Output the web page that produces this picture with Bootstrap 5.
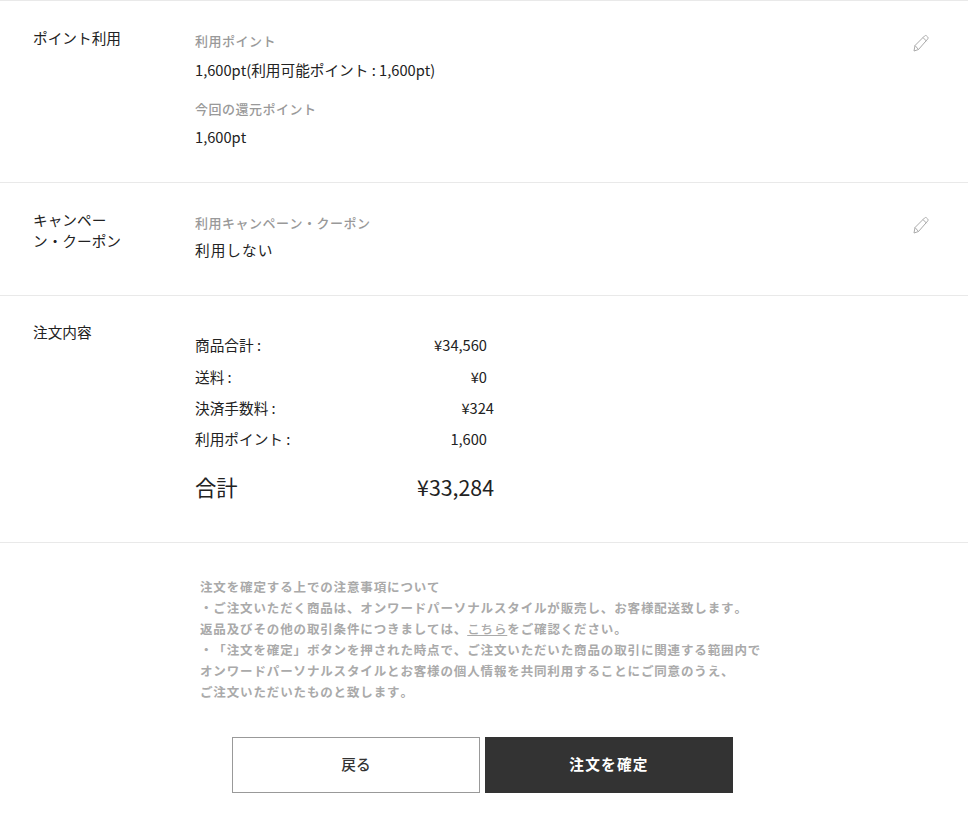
<!DOCTYPE html>
<html lang="ja">
<head>
    <meta charset="UTF-8">
    <title>注文内容の確認</title>
    <link rel="stylesheet" href="https://cdn.jsdelivr.net/npm/bootstrap@5.3.0/dist/css/bootstrap.min.css">
    <style>
        body {
            font-family: "Noto Sans CJK JP", "Noto Sans", sans-serif;
            font-size: 14.67px;
            color: #222;
            background: #fff;
            font-kerning: none;
            text-spacing-trim: space-all;
        }
        .sec-row { border-top: 1px solid #e9e9e9; padding-left: 33px; padding-right: 38px; }
        .sec-point { height: 182px; padding-top: 26px; }
        .sec-coupon { height: 113px; padding-top: 26px; }
        .sec-order { height: 247px; padding-top: 25px; }
        .sec-title { width: 88px; margin-right: 74px; line-height: 21px; flex: none; }
        .sec-body { flex: 1 1 auto; }
        .item-label { font-size: 13px; font-weight: 500; color: #999; letter-spacing: .5px; line-height: 18px; margin-top: 5px; }
        .item-value { line-height: 20px; margin-top: 10px; }
        .item-label.next + .item-value { margin-top: 9px; }
        .item-value.plain { letter-spacing: 1px; margin-top: 8px; }
        .item-label.next { margin-top: 20px; }
        .edit-pen { width: 18px; height: 18px; margin-top: 7px; flex: none; }
        .price-list { width: 300px; padding-top: 8.4px; }
        .price-line { height: 31.33px; line-height: 31.33px; }
        .price-amt { width: 292px; text-align: right; }
        .price-amt.wide { width: 299px; }
        .price-line > span:first-child { position: absolute; }
        .price-total { font-size: 21.33px; line-height: 30px; margin-top: 17px; display: flex; justify-content: space-between; width: 299px; }
        .notice-text { margin: 33px 0 0 200px; font-size: 12.5px; font-weight: 700; color: #aaa; letter-spacing: .86px; line-height: 21px; white-space: nowrap; }
        .notice-text a { color: #aaa; font-weight: 500; }
        .btn-row { margin: 35px 0 0 232px; gap: 5px; }
        .act-btn { width: 248px; height: 56px; border-radius: 0; font-size: 14.67px; display: flex; align-items: center; justify-content: center; padding-bottom: 8px; }
        .act-back { background: #fff; border: 1px solid #999; color: #333; font-weight: 500; }
        .act-go { background: #333; border: 1px solid #333; color: #fff; font-weight: 700; letter-spacing: 1.2px; }
    </style>
</head>
<body>
<div class="sec-row sec-point d-flex">
    <div class="sec-title">ポイント利用</div>
    <div class="sec-body">
        <div class="item-label">利用ポイント</div>
        <div class="item-value">1,600pt(利用可能ポイント : 1,600pt)</div>
        <div class="item-label next">今回の還元ポイント</div>
        <div class="item-value">1,600pt</div>
    </div>
    <svg class="edit-pen" viewBox="0 0 18 18" fill="none" stroke="#aaa" stroke-width="1"><path d="M2 17l1-5.5L12.5 2c.7-.7 1.6-.7 2.2 0l.9.9c.6.6.6 1.5 0 2.2L6.5 15.5z"/><path d="M11 3.6l3.6 3.6M3 11.5l3.5 4"/></svg>
</div>
<div class="sec-row sec-coupon d-flex">
    <div class="sec-title">キャンペーン・クーポン</div>
    <div class="sec-body">
        <div class="item-label">利用キャンペーン・クーポン</div>
        <div class="item-value plain">利用しない</div>
    </div>
    <svg class="edit-pen" viewBox="0 0 18 18" fill="none" stroke="#aaa" stroke-width="1"><path d="M2 17l1-5.5L12.5 2c.7-.7 1.6-.7 2.2 0l.9.9c.6.6.6 1.5 0 2.2L6.5 15.5z"/><path d="M11 3.6l3.6 3.6M3 11.5l3.5 4"/></svg>
</div>
<div class="sec-row sec-order d-flex">
    <div class="sec-title">注文内容</div>
    <div class="sec-body">
        <div class="price-list">
            <div class="price-line"><span>商品合計 :</span><div class="price-amt">¥34,560</div></div>
            <div class="price-line"><span>送料 :</span><div class="price-amt">¥0</div></div>
            <div class="price-line"><span>決済手数料 :</span><div class="price-amt wide">¥324</div></div>
            <div class="price-line"><span>利用ポイント :</span><div class="price-amt">1,600</div></div>
            <div class="price-total"><span>合計</span><span>¥33,284</span></div>
        </div>
    </div>
</div>
<div class="sec-row p-0">
    <p class="notice-text mb-0">注文を確定する上での注意事項について<br>・ご注文いただく商品は、オンワードパーソナルスタイルが販売し、お客様配送致します。<br>返品及びその他の取引条件につきましては、<a href="#">こちら</a>をご確認ください。<br>・「注文を確定」ボタンを押された時点で、ご注文いただいた商品の取引に関連する範囲内で<br>オンワードパーソナルスタイルとお客様の個人情報を共同利用することにご同意のうえ、<br>ご注文いただいたものと致します。</p>
    <div class="btn-row d-flex">
        <button type="button" class="btn act-btn act-back">戻る</button>
        <button type="button" class="btn act-btn act-go">注文を確定</button>
    </div>
</div>
<script src="https://cdn.jsdelivr.net/npm/bootstrap@5.3.0/dist/js/bootstrap.bundle.min.js"></script>
</body>
</html>
